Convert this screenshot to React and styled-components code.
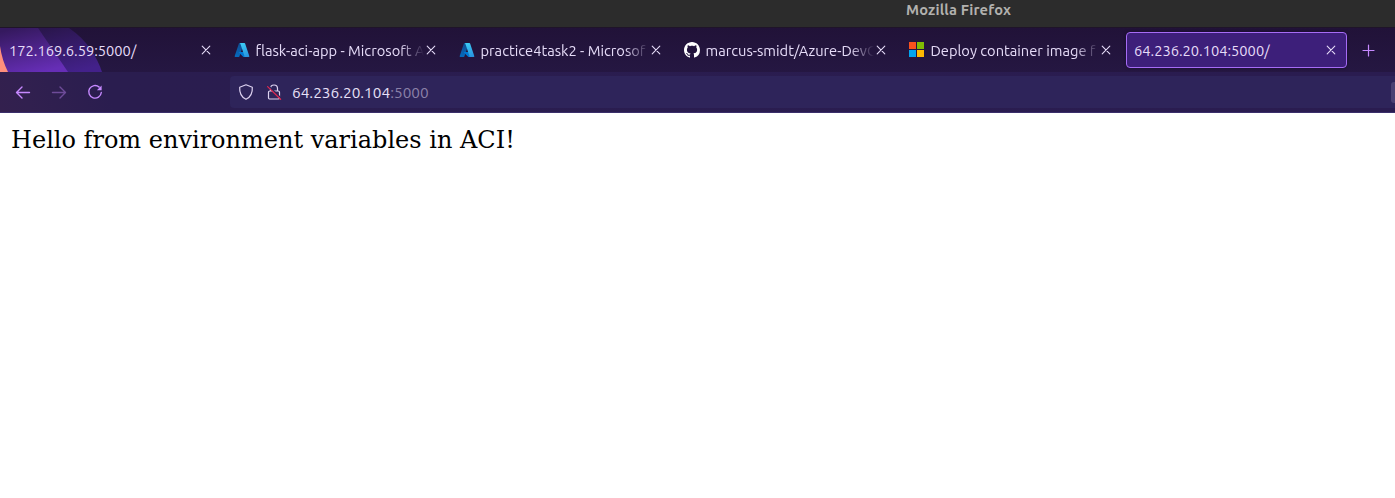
import React from "react";
import styled, { createGlobalStyle, css } from "styled-components";

const Global = createGlobalStyle`
  html, body { margin: 0; padding: 0; background: #fff; }
  body { overflow: hidden; }
  * { box-sizing: border-box; }
`;

const Window = styled.div`
  display: flex;
  flex-direction: column;
  height: 498px;
  overflow: hidden;
  font-family: Ubuntu, "Noto Sans", "Open Sans", sans-serif;
`;

const TitleBar = styled.header`
  height: 28px;
  flex: none;
  padding-left: 906px;
  background: #2c2c2c;
  border-bottom: 1px solid #1f1429;
  color: #b2b1ae;
  font-size: 14.6667px;
  font-weight: 700;
  line-height: 20px;
  letter-spacing: 0.17px;
  white-space: nowrap;
`;

const TabStrip = styled.nav`
  position: relative;
  display: flex;
  align-items: center;
  gap: 4px;
  height: 44px;
  flex: none;
  padding-left: 1px;
  background: linear-gradient(#211238, #251742);
`;

const ThemeArt = styled.svg`
  position: absolute;
  left: 0;
  top: 0;
`;

const Tab = styled.div`
  position: relative;
  display: flex;
  align-items: center;
  flex: none;
  width: 221px;
  height: 36px;
  padding: 0 10px 0 8px;
  border: 1px solid transparent;
  border-width: 1px 1px 1px 0;
  border-radius: 4px;
  ${(p) =>
    p.$active &&
    css`
      border-width: 1px;
      padding: 0 10px 0 7px;
      background: #3d1f7a;
      border-color: #a66cf5;
      box-shadow: 0 0 3px rgba(10, 2, 30, 0.5);
    `}
`;

const Favicon = styled.svg`
  flex: none;
  width: 16px;
  height: 16px;
  margin-right: 5.5px;
`;

const TabLabel = styled.span`
  flex: 1;
  min-width: 0;
  overflow: hidden;
  white-space: nowrap;
  color: #e6dcf8;
  font-size: 14.6667px;
  line-height: 22px;
  padding-top: 1px;
  ${(p) =>
    p.$fade &&
    css`
      mask-image: linear-gradient(to left, transparent 0, #000 24px);
    `}
`;

const CloseIcon = styled.svg`
  flex: none;
  width: 10px;
  height: 10px;
  margin-left: 2px;
`;

const NewTab = styled.svg`
  flex: none;
  width: 14px;
  height: 14px;
  margin-left: 10px;
`;

const Toolbar = styled.div`
  display: flex;
  align-items: center;
  height: 41px;
  flex: none;
  border-bottom: 1px solid #3b2f6b;
  background: linear-gradient(75deg, #33204e 0, #31204f 30px, #2a1d4f 110px, #2a1c50 100%);
`;

const NavButtons = styled.div`
  display: flex;
  gap: 20px;
  width: 230px;
  padding-left: 15px;
`;

const NavIcon = styled.svg`
  width: 16px;
  height: 16px;
  opacity: ${(p) => (p.$disabled ? 0.42 : 1)};
`;

const UrlBar = styled.div`
  display: flex;
  align-items: center;
  justify-content: space-between;
  flex: 1;
  height: 32px;
  padding-left: 8px;
  border-radius: 4px 0 0 4px;
  background: #2e245a;
`;

const UrlContent = styled.div`
  display: flex;
  align-items: center;
`;

const UrlIcon = styled.svg`
  width: 16px;
  height: 16px;
  margin-right: ${(p) => p.$gap}px;
`;

const Address = styled.span`
  padding-top: 2px;
  color: #e8e0f8;
  font-size: 15.4px;
  line-height: 22px;
  white-space: nowrap;
`;

const Port = styled.span`
  color: #8b81a8;
`;

const PageAction = styled.div`
  width: 4px;
  height: 21px;
  border-radius: 3px 0 0 3px;
  background: #4b4073;
`;

const Page = styled.main`
  flex: 1;
  padding: 13px 11px;
  background: #fff;
  color: #000;
  font-family: "DejaVu Serif", serif;
  font-size: 24px;
  line-height: 28px;
`;

const Azure = ({ id }) => (
  <Favicon viewBox="0 0 96 96">
    <defs>
      <linearGradient id={id + "a"} x1="60" y1="10" x2="30" y2="90" gradientUnits="userSpaceOnUse">
        <stop offset="0" stopColor="#114a8b" />
        <stop offset="1" stopColor="#0669bc" />
      </linearGradient>
      <linearGradient id={id + "b"} x1="46" y1="10" x2="80" y2="90" gradientUnits="userSpaceOnUse">
        <stop offset="0" stopColor="#3ccbf4" />
        <stop offset="1" stopColor="#2892df" />
      </linearGradient>
    </defs>
    <path fill={`url(#${id}a)`} d="M33.3 6.5h26L32.3 86.700a4.200 4.200 0 0 1-3.900 2.800H8.200a4.100 4.100 0 0 1-3.900-5.500L29.400 9.400a4.200 4.200 0 0 1 3.900-2.900z" />
    <path fill="#0078d4" d="M71.200 60.300H29.900a1.900 1.900 0 0 0-1.300 3.300l26.500 24.800a4.200 4.200 0 0 0 2.800 1.100h23.400z" />
    <path fill={`url(#${id}b)`} d="M66.600 9.400a4.100 4.100 0 0 0-3.900-2.900h-29a4.100 4.100 0 0 1 3.900 2.900l25.200 74.600a4.100 4.100 0 0 1-3.900 5.500h28.900a4.100 4.100 0 0 0 3.900-5.500z" />
  </Favicon>
);

const GitHub = () => (
  <Favicon viewBox="0 0 16 16" fill="#fff">
    <path d="M8 0C3.580 0 0 3.580 0 8c0 3.540 2.290 6.530 5.470 7.590.4.070.55-.170.55-.380 0-.190-.010-.820-.010-1.490-2.010.370-2.530-.490-2.690-.940-.090-.230-.480-.940-.820-1.130-.280-.150-.680-.520-.010-.530.630-.010 1.080.580 1.230.820.720 1.210 1.870.870 2.330.660.070-.520.280-.870.510-1.070-1.780-.200-3.640-.890-3.640-3.950 0-.870.310-1.590.820-2.150-.080-.200-.360-1.020.080-2.120 0 0 .670-.210 2.200.820.640-.180 1.320-.270 2-.270s1.360.090 2 .270c1.530-1.040 2.200-.820 2.200-.820.440 1.100.160 1.920.080 2.120.510.560.820 1.270.820 2.150 0 3.070-1.870 3.750-3.650 3.950.290.250.540.730.540 1.480 0 1.070-.010 1.930-.010 2.200 0 .210.150.460.550.380A8.010 8.010 0 0 0 16 8c0-4.420-3.580-8-8-8z" />
  </Favicon>
);

const Microsoft = () => (
  <Favicon viewBox="0 0 16 16" shapeRendering="crispEdges">
    <path fill="#f8511d" d="M0 0h7v7H0z" />
    <path fill="#80bb03" d="M8 0h7v7H8z" />
    <path fill="#02a4ef" d="M0 8h7v7H0z" />
    <path fill="#ffb902" d="M8 8h7v7H8z" />
  </Favicon>
);

const tabs = [
  { title: "172.169.6.59:5000/" },
  { title: "flask-aci-app - Microsoft A", icon: <Azure id="az1" />, fade: true },
  { title: "practice4task2 - Microsof", icon: <Azure id="az2" />, fade: true },
  { title: "marcus-smidt/Azure-DevO", icon: <GitHub />, fade: true },
  { title: "Deploy container image f", icon: <Microsoft />, fade: true },
  { title: "64.236.20.104:5000/", active: true },
];

export default function App() {
  return (
    <>
      <Global />
      <Window>
        <TitleBar>Mozilla Firefox</TitleBar>
        <TabStrip>
          <ThemeArt width="120" height="44">
            <defs>
              <linearGradient id="beam" x1="0.25" y1="0" x2="0.6" y2="1">
                <stop offset="0" stopColor="#35195f" />
                <stop offset="1" stopColor="#662eb6" />
              </linearGradient>
              <linearGradient id="arc" x1="0.2" y1="0" x2="0.6" y2="1">
                <stop offset="0" stopColor="#2a164d" />
                <stop offset="1" stopColor="#43218a" />
              </linearGradient>
            </defs>
            <path fill="url(#arc)" d="M36 0H69C87 12 97 29 102 44H60z" />
            <path fill="url(#beam)" d="M0 0H38L68 44H0z" />
            <path fill="#ff8f7c" d="M0 18Q2 32 8 44H0z" />
          </ThemeArt>
          {tabs.map((t) => (
            <Tab key={t.title} $active={t.active}>
              {t.icon}
              <TabLabel $fade={t.fade}>{t.title}</TabLabel>
              <CloseIcon viewBox="0 0 10 10" stroke="#e6dcf8" strokeWidth="1.100" strokeLinecap="round">
                <path d="M1.200 1.200l7.600 7.600M8.800 1.200l-7.600 7.600" />
              </CloseIcon>
            </Tab>
          ))}
          <NewTab viewBox="0 0 14 14" stroke="#c689ff" strokeWidth="1.200" strokeLinecap="round">
            <path d="M7.500 2v11M2 7.500h11" />
          </NewTab>
        </TabStrip>
        <Toolbar>
          <NavButtons>
            <NavIcon viewBox="0 0 16 16" fill="none" stroke="#c689ff" strokeWidth="1.400" strokeLinecap="round" strokeLinejoin="round">
              <path d="M14.500 8.500H1.700M7 3L1.500 8.500L7 14" />
            </NavIcon>
            <NavIcon $disabled viewBox="0 0 16 16" fill="none" stroke="#c689ff" strokeWidth="1.400" strokeLinecap="round" strokeLinejoin="round">
              <path d="M1.500 8.500h12.800M9 3l5.500 5.500L9 14" />
            </NavIcon>
            <NavIcon viewBox="0 0 16 16" fill="none" stroke="#c689ff" strokeWidth="1.400" strokeLinecap="round" strokeLinejoin="round">
              <path d="M12.200 3.100A6.300 6.300 0 1 0 14.300 8.500" />
              <path d="M14.600 1.500v4.700H9.900z" fill="#c689ff" stroke="none" />
            </NavIcon>
          </NavButtons>
          <UrlBar>
            <UrlContent>
              <UrlIcon $gap={12} viewBox="0 0 16 16" fill="none" stroke="#ddd2f0" strokeWidth="1.200" strokeLinejoin="round">
                <path d="M8 .8L14.300 3.200C14.700 9 12.300 13.200 8 15.300C3.700 13.200 1.300 9 1.700 3.200z" />
              </UrlIcon>
              <UrlIcon $gap={10} viewBox="0 0 16 16" fill="none" strokeWidth="1.200">
                <path stroke="#ddd2f0" d="M4.500 7V4.500a3.500 3.500 0 0 1 7 0V7M3.800 7h8.400a1.300 1.300 0 0 1 1.300 1.300v5.400a1.300 1.300 0 0 1-1.300 1.300H3.800a1.300 1.300 0 0 1-1.300-1.300V8.300A1.300 1.300 0 0 1 3.800 7z" />
                <path stroke="#2e245a" strokeWidth="1.600" d="M2.400 1.800l13 12.700" />
                <path stroke="#e22850" strokeLinecap="round" d="M1.600 2.600l13 12.700" />
              </UrlIcon>
              <Address>64.236.20.104<Port>:5000</Port></Address>
            </UrlContent>
            <PageAction />
          </UrlBar>
        </Toolbar>
        <Page>Hello from environment variables in ACI!</Page>
      </Window>
    </>
  );
}
